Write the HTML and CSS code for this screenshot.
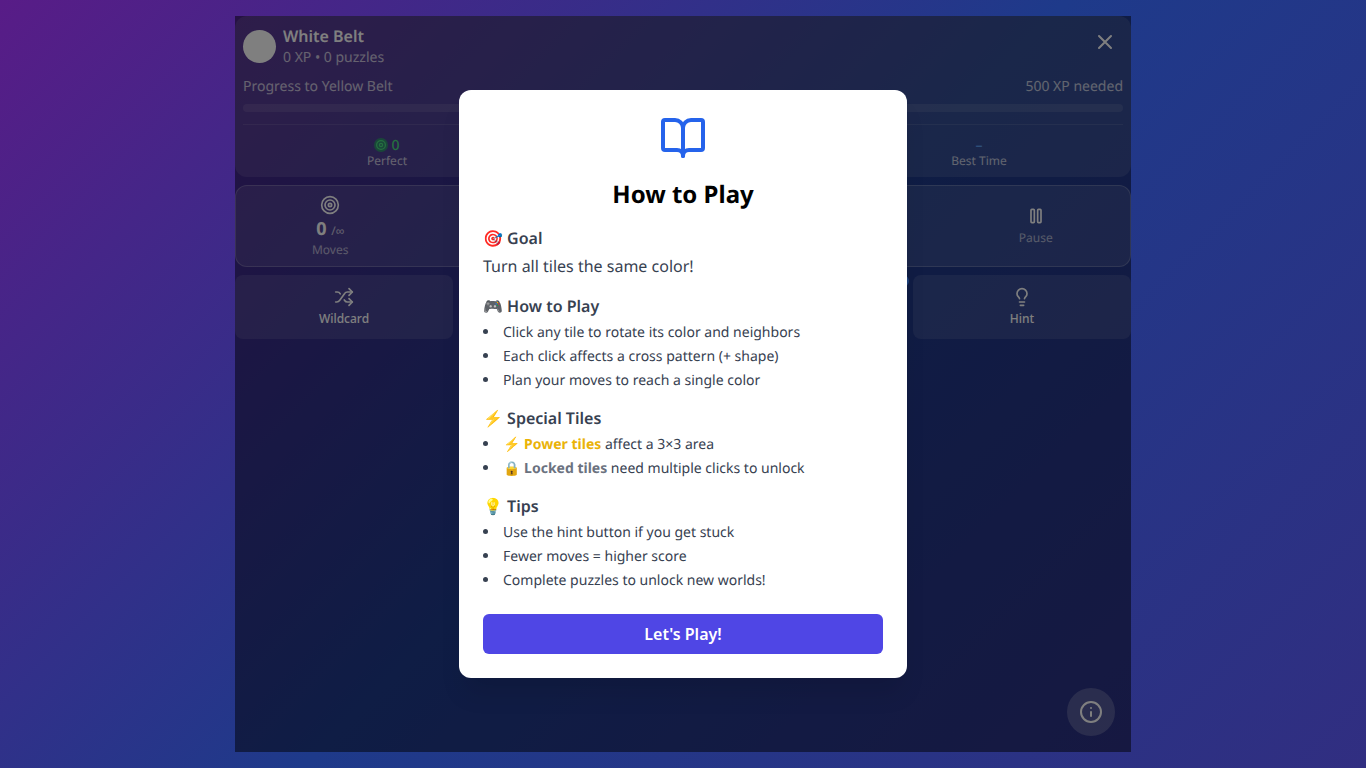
FILE: index.html
```html
<!DOCTYPE html>
<html lang="en">
<head>
<meta charset="utf-8">
<title>How to Play</title>
<link rel="stylesheet" href="styles.css">
</head>
<body>
<div class="app">
  <section class="profile">
    <div class="profile-top">
      <div class="avatar"></div>
      <div class="profile-text">
        <div class="belt">White Belt</div>
        <div class="xp">0 XP • 0 puzzles</div>
      </div>
      <svg class="close" viewBox="0 0 24 24" width="24" height="24"><path d="M6 6l12 12M18 6L6 18"/></svg>
    </div>
    <div class="progress-labels"><span>Progress to Yellow Belt</span><span>500 XP needed</span></div>
    <div class="bar"></div>
    <div class="mini-stats">
      <div class="mini">
        <div class="mini-value green"><svg class="target-dot" viewBox="0 0 14 14" width="14" height="14"><circle class="dot-bg" cx="7" cy="7" r="7"/><circle cx="7" cy="7" r="4.4"/><circle cx="7" cy="7" r="1.6"/></svg><span class="mini-num">0</span></div>
        <div class="mini-label">Perfect</div>
      </div>
      <div class="mini"></div>
      <div class="mini">
        <div class="mini-value teal"><span class="mini-num">–</span></div>
        <div class="mini-label">Best Time</div>
      </div>
    </div>
  </section>
  <section class="stats">
    <div class="stat">
      <svg class="stat-icon" viewBox="0 0 24 24" width="20" height="20"><circle cx="12" cy="12" r="10"/><circle cx="12" cy="12" r="6"/><circle cx="12" cy="12" r="2"/></svg>
      <div class="stat-value">0 <small>/∞</small></div>
      <div class="stat-label">Moves</div>
    </div>
    <div class="stat"></div>
    <div class="stat"></div>
    <div class="stat"></div>
    <div class="stat">
      <svg class="stat-icon" viewBox="0 0 24 24" width="20" height="20"><rect x="6" y="4" width="4" height="16" rx="1"/><rect x="14" y="4" width="4" height="16" rx="1"/></svg>
      <div class="stat-label">Pause</div>
    </div>
  </section>
  <section class="actions">
    <button class="action">
      <svg viewBox="0 0 24 24" width="20" height="20"><path d="M2 18h1.4c1.3 0 2.5-.6 3.3-1.7l6.1-8.6c.7-1.1 2-1.7 3.3-1.7H22"/><path d="m18 2 4 4-4 4"/><path d="M2 6h1.9c1.5 0 2.9.9 3.6 2.2"/><path d="M22 18h-5.9c-1.3 0-2.6-.7-3.3-1.8l-.5-.8"/><path d="m18 14 4 4-4 4"/></svg>
      <span>Wildcard</span>
    </button>
    <button class="action"></button>
    <button class="action"><span class="badge"></span></button>
    <button class="action">
      <svg viewBox="0 0 24 24" width="20" height="20"><path d="M15 14c.2-1 .7-1.7 1.5-2.5 1-.9 1.5-2.2 1.5-3.5A6 6 0 0 0 6 8c0 1 .2 2.2 1.5 3.5.7.7 1.3 1.5 1.5 2.5"/><path d="M9 18h6"/><path d="M10 22h4"/></svg>
      <span>Hint</span>
    </button>
  </section>
  <button class="info" aria-label="Info">
    <svg viewBox="0 0 24 24" width="24" height="24"><circle cx="12" cy="12" r="10"/><path d="M12 16v-4"/><path d="M12 8h.01"/></svg>
  </button>
  <div class="overlay">
    <div class="modal">
      <svg class="book" viewBox="0 0 24 24" width="48" height="48"><path d="M12 7v14"/><path d="M3 18a1 1 0 0 1-1-1V4a1 1 0 0 1 1-1h5a4 4 0 0 1 4 4 4 4 0 0 1 4-4h5a1 1 0 0 1 1 1v13a1 1 0 0 1-1 1h-6a3 3 0 0 0-3 3 3 3 0 0 0-3-3z"/></svg>
      <h2>How to Play</h2>
      <div class="block">
        <h3>🎯 Goal</h3>
        <p>Turn all tiles the same color!</p>
      </div>
      <div class="block">
        <h3>🎮 How to Play</h3>
        <ul>
          <li>Click any tile to rotate its color and neighbors</li>
          <li>Each click affects a cross pattern (+ shape)</li>
          <li>Plan your moves to reach a single color</li>
        </ul>
      </div>
      <div class="block">
        <h3>⚡ Special Tiles</h3>
        <ul>
          <li>⚡ <strong class="power">Power tiles</strong> affect a 3×3 area</li>
          <li>🔒 <strong class="locked">Locked tiles</strong> need multiple clicks to unlock</li>
        </ul>
      </div>
      <div class="block">
        <h3>💡 Tips</h3>
        <ul>
          <li>Use the hint button if you get stuck</li>
          <li>Fewer moves = higher score</li>
          <li>Complete puzzles to unlock new worlds!</li>
        </ul>
      </div>
      <button class="play">Let's Play!</button>
    </div>
  </div>
</div>
</body>
</html>
```
FILE: styles.css
```css
* { box-sizing: border-box; }
html, body { height: 100%; }
body {
  margin: 0;
  padding: 16px 0;
  font-family: "Noto Sans", sans-serif;
  text-rendering: geometricPrecision;
  color: #fff;
  background: linear-gradient(135deg, #581c87 0%, #1e3a8a 50%, #312e81 100%);
  overflow: hidden;
}
svg { fill: none; stroke: currentColor; stroke-width: 2; stroke-linecap: round; stroke-linejoin: round; display: block; }
.app { position: relative; width: 896px; height: 736px; margin: 0 auto; display: flex; flex-direction: column; gap: 8px; }
.profile { height: 161px; padding: 8px; border-radius: 12px; background: rgba(255,255,255,.1); }
.profile-top { display: flex; align-items: center; gap: 7px; height: 44px; }
.avatar { width: 33px; height: 33px; border-radius: 50%; background: #fff; }
.profile-text { flex: 1; }
.belt { font-size: 16px; font-weight: 600; line-height: 22px; padding-top: 1px; }
.xp { font-size: 14px; line-height: 20px; opacity: .7; padding-top: 1px; }
.close { color: #fff; margin-right: 6px; margin-top: -8px; }
.progress-labels { display: flex; justify-content: space-between; font-size: 14px; line-height: 20px; opacity: .7; margin-top: 8px; padding-top: 1px; }
.bar { height: 8px; border-radius: 4px; background: rgba(255,255,255,.1); margin-top: 7px; }
.mini-stats { display: grid; grid-template-columns: repeat(3, 1fr); gap: 8px; margin-top: 12px; border-top: 1px solid rgba(255,255,255,.1); padding-top: 12px; }
.mini { text-align: center; }
.mini-value { height: 16px; font-size: 14px; line-height: 14px; font-weight: 500; display: flex; justify-content: center; align-items: center; gap: 3px; }
.mini-num { padding-top: 2px; }
.green { color: #4ade80; }
.teal { color: #60a5fa; }
.target-dot { stroke-width: 1.2; }
.dot-bg { fill: rgba(34,197,94,.6); stroke: none; }
.mini-label { font-size: 12px; line-height: 16px; opacity: .7; }
.stats { height: 82px; display: grid; grid-template-columns: repeat(5, 1fr); gap: 12px; padding: 1px 12px 0; border: 1px solid rgba(255,255,255,.2); border-radius: 12px; background: rgba(255,255,255,.1); }
.stat { display: flex; flex-direction: column; align-items: center; justify-content: center; }
.stat-icon { color: #fff; margin-bottom: 3px; }
.stat-value { font-size: 18px; line-height: 24px; font-weight: 700; height: 24px; margin-top: -1px; }
.stat-value small { font-size: 12px; font-weight: 400; opacity: .7; }
.stat-label { font-size: 12px; line-height: 18px; opacity: .6; }
.actions { height: 64px; display: grid; grid-template-columns: repeat(4, 1fr); gap: 8px; }
.action { position: relative; display: flex; flex-direction: column; align-items: center; justify-content: center; gap: 3px; font-family: inherit; font-size: 12px; font-weight: 500; line-height: 18px; color: #fff; border: 0; border-radius: 8px; background: rgba(255,255,255,.1); }
.badge { position: absolute; top: 0; right: -4px; width: 12px; height: 12px; border-radius: 50%; background: #3b82f6; }
.info { position: absolute; right: 16px; bottom: 16px; width: 48px; height: 48px; border: 0; border-radius: 50%; background: rgba(255,255,255,.2); color: #fff; display: flex; align-items: center; justify-content: center; }
.overlay { position: absolute; inset: 0; background: rgba(0,0,0,.5); display: flex; align-items: center; justify-content: center; }
.modal { width: 448px; height: 588px; padding: 24px; border-radius: 12px; background: #fff; color: #374151; box-shadow: 0 20px 25px -5px rgba(0,0,0,.1); }
.book { color: #2563eb; margin: 0 auto; }
h2 { margin: 16px 0 15px; padding-top: 1px; font-size: 24px; line-height: 32px; font-weight: 700; color: #000; text-align: center; }
.block { margin-bottom: 16px; }
h3 { margin: 0 0 4px; font-size: 16px; line-height: 24px; font-weight: 600; }
p { margin: 0; font-size: 16px; line-height: 24px; }
ul { margin: 0 0 -1px; padding: 0; list-style: none; display: flex; flex-direction: column; gap: 3px; font-size: 14px; line-height: 20px; }
li { padding-top: 1px; }
li::before { content: ""; display: inline-block; width: 5px; height: 5px; border-radius: 50%; background: currentColor; margin-right: 15px; vertical-align: 3px; }
.power { color: #eab308; font-weight: 700; }
.locked { color: #6b7280; font-weight: 700; }
.play { display: block; width: 100%; height: 40px; margin-top: 24px; border: 0; border-radius: 6px; background: #4f46e5; color: #fff; font-family: inherit; font-size: 16px; font-weight: 600; line-height: 24px; }
```
